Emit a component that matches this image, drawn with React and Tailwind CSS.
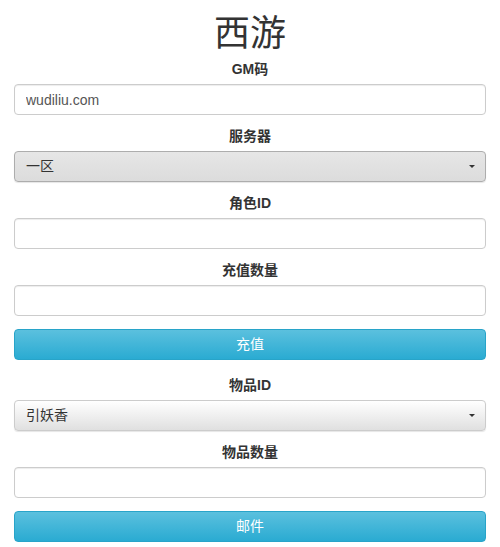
const font = { fontFamily: '"Liberation Sans", "Noto Sans CJK SC", sans-serif' }

const inputClass =
  'block h-[31px] w-full rounded-[4px] border border-[#ccc] bg-white px-[11px] text-[14px] text-[#555] shadow-[inset_0_1px_1px_rgba(0,0,0,0.075)] outline-none'

function Label({ children, first }) {
  return (
    <label
      className={`block h-[20px] text-center text-[14px] font-bold leading-[20px] text-[#333] mb-[5px] ${
        first ? 'mt-[5px]' : 'mt-[11px]'
      }`}
    >
      {children}
    </label>
  )
}

function FakeSelect({ value, dark }) {
  return (
    <div
      className={`flex h-[31px] w-full items-center justify-between rounded-[4px] border pl-[11px] pr-[10px] text-[14px] text-[#333] shadow-[0_1px_1px_rgba(0,0,0,0.1)] ${
        dark
          ? 'border-[#adadad] bg-[linear-gradient(to_bottom,#e6e6e6_0%,#dcdcdc_100%)]'
          : 'border-[#ccc] bg-[linear-gradient(to_bottom,#fff_0%,#e0e0e0_100%)]'
      }`}
    >
      <span>{value}</span>
      <span className="h-0 w-0 border-x-[3px] border-t-[3px] border-x-transparent border-t-[#333]" />
    </div>
  )
}

function InfoButton({ children, className = '' }) {
  return (
    <button
      type="button"
      className={`block h-[31px] w-full rounded-[4px] border border-[#28a4c9] bg-[linear-gradient(to_bottom,#5bc0de_0%,#2aabd2_100%)] text-[14px] text-white ${className}`}
    >
      {children}
    </button>
  )
}

export default function App() {
  return (
    <div className="min-h-[547px] bg-white px-[14px]" style={font}>
      <h1 className="pt-[14px] text-center text-[36px] font-normal leading-[40px] text-[#333]">西游</h1>

      <Label first>GM码</Label>
      <input className={inputClass} defaultValue="wudiliu.com" />

      <Label>服务器</Label>
      <FakeSelect value="一区" dark />

      <Label>角色ID</Label>
      <input className={inputClass} />

      <Label>充值数量</Label>
      <input className={inputClass} />

      <InfoButton className="mt-[13px]">充值</InfoButton>

      <label className="mt-[15px] mb-[5px] block h-[20px] text-center text-[14px] font-bold leading-[20px] text-[#333]">
        物品ID
      </label>
      <FakeSelect value="引妖香" />

      <Label>物品数量</Label>
      <input className={inputClass} />

      <InfoButton className="mt-[13px]">邮件</InfoButton>
    </div>
  )
}
